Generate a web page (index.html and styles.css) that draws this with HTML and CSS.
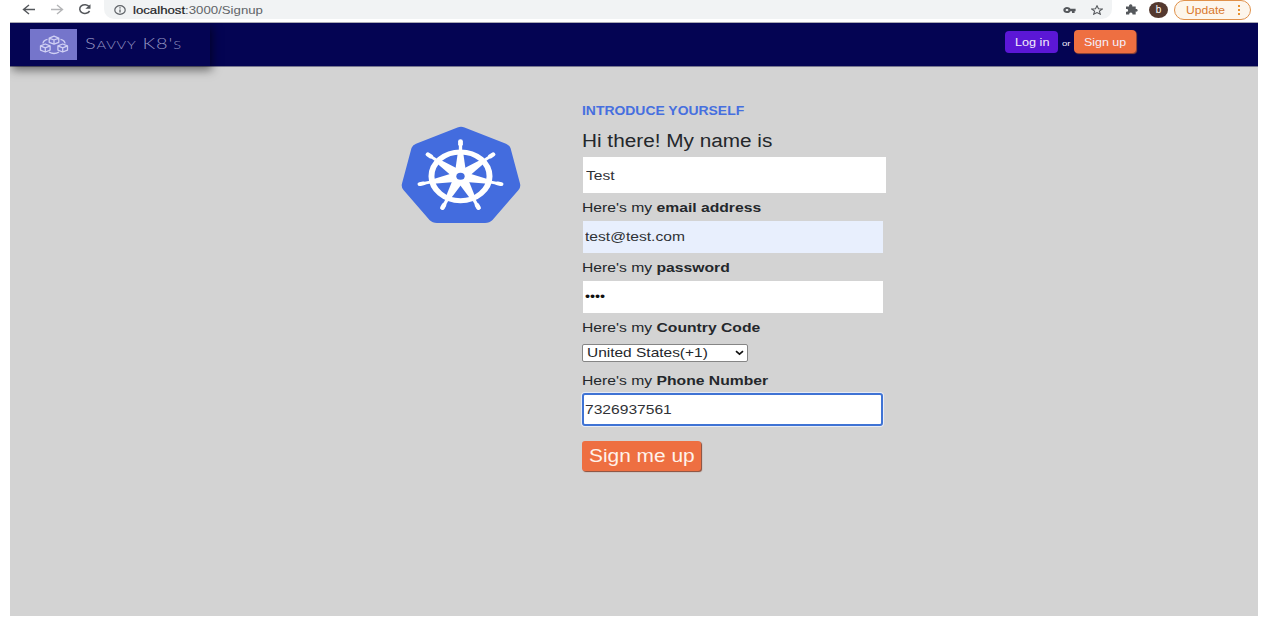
FILE: index.html
```html
<!DOCTYPE html>
<html lang="en">
<head>
<meta charset="utf-8">
<title>Savvy K8's</title>
<link rel="stylesheet" href="styles.css">
</head>
<body>
<div class="window">
  <div class="toolbar">
    <svg class="nav-icons" width="84" height="19" viewBox="0 0 84 19" fill="none">
      <path d="M25 9.500H14M19 5l-5.500 4.500 5.500 4.500" stroke="#55585c" stroke-width="1.400"/>
      <path d="M41 9.500h11M47 5l5.500 4.500-5.500 4.500" stroke="#b4b5b7" stroke-width="1.400"/>
      <path d="M79.200 6.500A5.200 4.400 0 1 0 79.600 11" stroke="#55585c" stroke-width="1.500"/>
      <path d="M80.500 4.300v4.400h-5.200z" fill="#55585c"/>
    </svg>
    <div class="address">
      <svg class="info" width="12" height="10" viewBox="0 0 12 10" fill="none" stroke="#5f6368">
        <ellipse cx="6" cy="5" rx="5.200" ry="4.300" stroke-width="1.200"/>
        <path d="M6 4.500v3M6 2.300v1.200" stroke-width="1.300"/>
      </svg>
      <span class="t url"><b>localhost</b>:3000/Signup</span>
      <svg class="key" width="13" height="8" viewBox="0 0 13 8">
        <path d="M4 .9C1.900 .9.300 2.200.300 4s1.600 3.100 3.700 3.100c1.600 0 2.900-.7 3.400-1.900H9v1.900h2.600V5.200h1V2.800H7.400C6.900 1.600 5.600.9 4 .9zM4 2.900c.8 0 1.400.5 1.400 1.100S4.800 5.100 4 5.100 2.600 4.600 2.600 4 3.200 2.900 4 2.900z" fill="#55585c" fill-rule="evenodd"/>
      </svg>
      <svg class="star" width="12" height="10" viewBox="0 0 12 10">
        <path d="M6 .8l1.500 2.900 3.800.3-2.900 2.100.9 3.100L6 7.500 2.700 9.200l.9-3.100L.700 4l3.800-.3z" fill="none" stroke="#55585c" stroke-width="1.100"/>
      </svg>
    </div>
    <svg class="puzzle" width="13" height="11" viewBox="0 0 13 11">
      <path d="M1 2.600h3.100C3.700 1.100 4.500.2 5.700.2s2 .9 1.600 2.400h3.400V5c1.300-.2 2 .4 2 1.300s-.7 1.500-2 1.300v2.900H7.500C7.600 9.200 6.900 8.500 5.900 8.500s-1.800.7-1.700 2H1V7.700c1.300.1 2.100-.4 2.100-1.300S2.300 5 1 5.100z" fill="#55585c"/>
    </svg>
    <div class="avatar">b</div>
    <div class="update"><span class="t">Update</span><i class="dots"></i></div>
  </div>

  <header class="header">
    <div class="brand">
      <div class="brand-mark">
        <svg width="30" height="20" viewBox="0 0 30 20" fill="none" stroke="#d0d0f4" stroke-width="1.300" stroke-linejoin="round">
          <path d="M15 1.200l4.800 1.900v4.200L15 9.200l-4.800-1.900V3.100zM10.200 3.100L15 5l4.800-1.900M15 5v4.200"/>
          <path d="M6.300 9l4.800 1.900v4.200L6.300 17l-4.800-1.900v-4.200zM1.500 10.900l4.800 1.900 4.800-1.900M6.300 12.800V17"/>
          <path d="M23.700 9l4.800 1.900v4.200L23.700 17l-4.800-1.900v-4.200zM18.900 10.900l4.800 1.900 4.800-1.900M23.700 12.800V17"/>
          <path d="M8.500 4.300Q4 5.500 4 8.500M21.500 4.300Q26 5.500 26 8.500M10 17q5 3 10 0"/>
        </svg>
      </div>
      <span class="t brand-name">Savvy K8's</span>
    </div>
    <div class="auth">
      <div class="btn login"><span class="t">Log in</span></div>
      <span class="t or">or</span>
      <div class="btn signup"><span class="t">Sign up</span></div>
    </div>
  </header>

  <main class="main">
    <svg class="k8s" width="120" height="98" viewBox="0 0 120 98">
      <path d="M56.500 1.400Q60 .2 63.500 1.400L105 17.700Q108.500 19.200 109.500 22L119 57.500Q120 61 117.500 64L91.500 94Q88.500 97 84 97H36Q31.500 97 28.500 94L2.500 64Q0 61 1 57.500L10.500 22Q11.500 19.200 15 17.700Z" fill="#436cde"/>
      <g transform="translate(59.500 50.300) scale(1.19 1)" fill="#fff">
        <circle r="24.400" fill="none" stroke="#fff" stroke-width="5"/>
        <g id="spoke"><path d="M-4.400-6L-2.200-24H2.200L4.400-6z"/><path d="M0-24V-35" stroke="#fff" stroke-width="2.800"/><path d="M0-32V-35" stroke="#fff" stroke-width="4" stroke-linecap="round"/></g>
        <use href="#spoke" transform="rotate(51.430)"/>
        <use href="#spoke" transform="rotate(102.860)"/>
        <use href="#spoke" transform="rotate(154.290)"/>
        <use href="#spoke" transform="rotate(205.710)"/>
        <use href="#spoke" transform="rotate(257.140)"/>
        <use href="#spoke" transform="rotate(308.570)"/>
        <circle r="8"/>
        <circle r="3.500" fill="#436cde"/>
      </g>
    </svg>

    <form class="form">
      <div class="line eyebrow"><span class="t">INTRODUCE YOURSELF</span></div>
      <div class="line hello"><span class="t">Hi there! My name is</span></div>
      <div class="field name"><span class="t">Test</span></div>
      <div class="line label"><span class="t">Here's my <b>email address</b></span></div>
      <div class="field email"><span class="t">test@test.com</span></div>
      <div class="line label"><span class="t">Here's my <b>password</b></span></div>
      <div class="field password"><span class="t">••••</span></div>
      <div class="line label"><span class="t">Here's my <b>Country Code</b></span></div>
      <div class="select"><span class="t">United States(+1)</span>
        <svg width="9" height="6" viewBox="0 0 9 6"><path d="M1 1.200l3.500 3 3.500-3" fill="none" stroke="#111" stroke-width="1.700"/></svg>
      </div>
      <div class="line label phone-label"><span class="t">Here's my <b>Phone Number</b></span></div>
      <div class="field phone"><span class="t">7326937561</span></div>
      <div class="submit"><span class="t">Sign me up</span></div>
    </form>
  </main>
</div>
</body>
</html>
```
FILE: styles.css
```css
* { box-sizing: border-box; }
body {
  margin: 0;
  height: 618px;
  overflow: hidden;
  background: #fff;
  font-family: "Liberation Sans", Arial, sans-serif;
  color: #24272b;
}
.window {
  width: 1248px;
  height: 616px;
  margin-left: 10px;
  display: flex;
  flex-direction: column;
}
svg { display: block; flex: none; }
.t {
  display: inline-block;
  white-space: nowrap;
  transform: scaleX(1.2);
  transform-origin: 0 50%;
}

.toolbar {
  height: 23px;
  flex: none;
  display: flex;
  align-items: flex-start;
  border-bottom: 1px solid #aaaab4;
}
.nav-icons { margin-right: 10px; }
.address {
  width: 1008px;
  height: 19px;
  display: flex;
  align-items: center;
  padding-left: 10px;
  border-radius: 0 0 10px 10px;
  background: #f1f3f4;
}
.url { margin-left: 7px; font-size: 11px; color: #606367; width: 120px; }
.url b { font-weight: 400; color: #202124; -webkit-text-stroke: 0.2px #202124; }
.key { margin-left: auto; }
.star { margin: 0 9px 0 15px; }
.puzzle { margin: 4px 11px 0 13px; }
.avatar {
  width: 19px;
  height: 16px;
  margin: 2px 6px 0 0;
  border-radius: 50%;
  background: #54392f;
  color: #fff;
  font-size: 10px;
  line-height: 16px;
  text-align: center;
}
.update {
  width: 77px;
  height: 20px;
  display: flex;
  align-items: center;
  padding-left: 11px;
  border: 1px solid #e0914a;
  border-radius: 10px;
  background: #fdf6ec;
  color: #d9782d;
  font-size: 11px;
}
.update .t { transform: scaleX(1.1); }
.dots {
  width: 2px;
  height: 2px;
  margin-left: 17px;
  background: #e8912d;
  box-shadow: 0 -4px #e8912d, 0 4px #e8912d;
}

.header {
  position: relative;
  z-index: 1;
  height: 44px;
  flex: none;
  display: flex;
  justify-content: space-between;
  background: #040453;
  border-bottom: 1px solid #77778f;
}
.brand {
  width: 200px;
  height: 43px;
  display: flex;
  align-items: center;
  padding-left: 20px;
  background: #040453;
  box-shadow: 2px 4px 9px rgba(0, 0, 0, 0.5);
  clip-path: inset(0 -16px -16px 0);
}
.brand-mark {
  width: 47px;
  height: 31px;
  display: grid;
  place-items: center;
  background: #7575cb;
}
.brand-name {
  margin: 0 0 3px 8px;
  font-family: Lato, sans-serif;
  font-weight: 300;
  font-variant: small-caps;
  font-size: 15px;
  letter-spacing: 0.6px;
  color: #9393c0;
  transform: scaleX(1.33);
}
.auth {
  display: flex;
  align-items: flex-start;
  padding: 8px 122px 0 0;
  color: #f4eefc;
}
.btn { font-size: 11px; border-radius: 4px; }
.login { width: 53px; height: 22px; padding-left: 10px; line-height: 22px; background: #5b17d6; }
.login .t { transform: scaleX(1.15); }
.or { width: 8px; margin: 7px 4px 0; font-size: 8px; line-height: 11px; }
.signup {
  width: 62px;
  height: 23px;
  margin-top: -1px;
  padding-left: 10px;
  line-height: 24px;
  background: #ee6f41;
  box-shadow: 1px 1px 1px #9b4b35;
}
.signup .t { transform: scaleX(1.13); }

.main {
  flex: 1;
  display: flex;
  align-items: flex-start;
  padding-left: 391px;
  background: #d3d3d3;
}
.k8s { margin-top: 59px; }
.form { margin: 35px 0 0 61px; width: 310px; }
.line { height: 28px; line-height: 29px; font-size: 13px; }
.label .t { transform: scaleX(1.207); }
.eyebrow { height: 17px; line-height: 18px; font-size: 12px; font-weight: 700; color: #466fdf; }
.eyebrow .t { transform: scaleX(1.16); }
.hello { height: 38px; line-height: 44px; font-size: 18px; }
.hello .t { transform: scaleX(1.153); }
.field {
  width: 300px;
  height: 32px;
  line-height: 32px;
  padding-left: 2px;
  margin-left: 1px;
  font-size: 13px;
  background: #fff;
  color: #303236;
}
.name { width: 303px; height: 36px; line-height: 37px; padding-left: 3px; }
.email { background: #e8effd; }
.password { font-size: 12px; color: #111; }
.select {
  width: 166px;
  height: 18px;
  margin-top: 3px;
  display: flex;
  align-items: center;
  justify-content: space-between;
  padding: 0 3px 1px 4px;
  border: 1px solid #858585;
  border-radius: 2px;
  background: #fff;
  font-size: 13px;
}
.select .t { transform: scaleX(1.19); }
.phone-label { height: 31px; line-height: 37px; }
.phone {
  width: 301px;
  height: 33px;
  margin-left: 0;
  line-height: 29px;
  border: 2px solid #3f73d4;
  border-radius: 3px;
  padding-left: 1px;
  box-shadow: 0 0 0 1px #e8ecf5;
}
.submit {
  width: 119px;
  height: 30px;
  margin-top: 15px;
  padding-left: 7px;
  line-height: 31px;
  font-size: 18px;
  border-radius: 3px;
  background: #ee6f41;
  color: #fff2ea;
  box-shadow: 1px 1px 1px #8a4a36;
}
.submit .t { transform: scaleX(1.16); }
```
